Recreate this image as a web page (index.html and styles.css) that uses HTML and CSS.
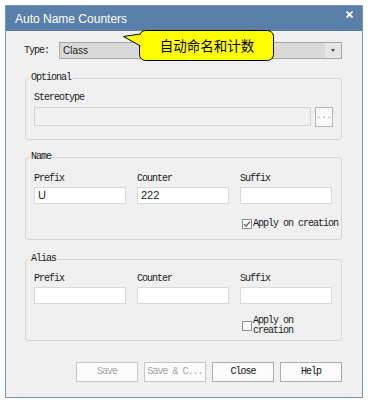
FILE: index.html
```html
<!DOCTYPE html>
<html lang="en">
<head>
    <meta charset="UTF-8" />
    <title>Auto Name Counters</title>
    <link rel="stylesheet" href="styles.css">
</head>
<body>
    <div class="window">
        <div class="titlebar">
            <span class="title">Auto Name Counters</span>
            <svg class="close" width="7" height="7" viewBox="0 0 7 7">
                <path d="M0.5 0.5 L6.5 6.5 M6.5 0.5 L0.5 6.5" stroke="#fff" stroke-width="1.8" />
            </svg>
        </div>
        <div class="content">
            <div class="type-row">
                <span class="type-label">Type:</span>
                <div class="combo">
                    <span class="combo-value">Class</span>
                    <span class="combo-arrow"><span class="arrow"></span></span>
                </div>
            </div>

            <fieldset class="group group-optional">
                <legend>Optional</legend>
                <div class="label">Stereotype</div>
                <div class="stereo-row">
                    <div class="field disabled"></div>
                    <div class="browse">...</div>
                </div>
            </fieldset>

            <fieldset class="group group-name">
                <legend>Name</legend>
                <div class="cols">
                    <div class="label">Prefix</div>
                    <div class="label">Counter</div>
                    <div class="label">Suffix</div>
                    <div class="field"><span class="value">U</span></div>
                    <div class="field"><span class="value">222</span></div>
                    <div class="field"></div>
                    <label class="check check-one">
                        <svg class="box" width="10" height="10" viewBox="0 0 10 10">
                            <rect x="0.5" y="0.5" width="9" height="9" fill="#fff" stroke="#8e8e8e" />
                            <path d="M2 5 L4 7.2 L8 2.6" fill="none" stroke="#4a4a4a" stroke-width="1.1" />
                        </svg>
                        <span>Apply on creation</span>
                    </label>
                </div>
            </fieldset>

            <fieldset class="group group-alias">
                <legend>Alias</legend>
                <div class="cols">
                    <div class="label">Prefix</div>
                    <div class="label">Counter</div>
                    <div class="label">Suffix</div>
                    <div class="field"></div>
                    <div class="field"></div>
                    <div class="field"></div>
                    <label class="check check-two">
                        <svg class="box" width="10" height="10" viewBox="0 0 10 10">
                            <rect x="0.5" y="0.5" width="9" height="9" fill="#fff" stroke="#8e8e8e" />
                        </svg>
                        <span>Apply on<br>creation</span>
                    </label>
                </div>
            </fieldset>

            <div class="buttons">
                <div class="button disabled">Save</div>
                <div class="button disabled">Save &amp; C...</div>
                <div class="button">Close</div>
                <div class="button">Help</div>
            </div>
        </div>

        <div class="balloon">
            <svg width="152" height="32" viewBox="0 0 152 32">
                <rect x="16.5" y="0.5" width="134" height="30" rx="6" fill="#ffff00" stroke="#000" />
                <path d="M17.5 4 L0.5 6.5 L17.5 16" fill="#ffff00" stroke="#000" />
            </svg>
            <span class="balloon-text">自动命名和计数</span>
        </div>
    </div>
</body>
</html>
```

FILE: styles.css
```css
body {
    margin: 0;
    background-color: #ffffff;
    font-family: "Liberation Mono", monospace;
    font-size: 10px;
    letter-spacing: -1px;
    color: #1a1a1a;
}
.window {
    position: relative;
    margin: 5px 0 0 5px;
    width: 358px;
    height: 393px;
    box-sizing: border-box;
    border: 1px solid #7293bb;
    background-color: #f0f0f0;
}
.titlebar {
    height: 25px;
    background-color: #5a7fa9;
    display: flex;
    justify-content: space-between;
    align-items: flex-start;
    padding: 0 9px 0 9px;
}
.title {
    margin-top: 6px;
    font-family: "Liberation Sans", sans-serif;
    font-size: 12px;
    line-height: 14px;
    letter-spacing: 0;
    color: #ffffff;
}
.close {
    margin-top: 5px;
}
.content {
    display: flex;
    flex-direction: column;
    padding: 0 20px 0 19px;
}
.type-row {
    display: flex;
    align-items: center;
    margin-top: 11px;
    height: 17px;
}
.type-label {
    width: 34px;
    margin-left: -1px;
    padding-left: 0;
}
.combo {
    display: flex;
    width: 283px;
    height: 17px;
    margin-left: 1px;
    box-sizing: border-box;
    border: 1px solid #a7a7a7;
    background-color: #d9d9d9;
}
.combo-value {
    flex: 1;
    padding-left: 3px;
    font-family: "Liberation Sans", sans-serif;
    font-size: 10px;
    letter-spacing: 0;
    line-height: 15px;
    color: #222;
}
.combo-arrow {
    width: 16px;
    background-color: #e6e6e6;
    display: flex;
    align-items: center;
    justify-content: center;
}
.arrow {
    width: 0;
    height: 0;
    border-left: 2px solid transparent;
    border-right: 2px solid transparent;
    border-top: 3px solid #444;
}
.group {
    margin: 0;
    border: 1px solid #d6d6d6;
    border-radius: 3px;
    padding: 8px 8px 12px 8px;
    min-width: 0;
}
.group legend {
    padding: 0 2px;
    margin-left: -5px;
    line-height: 12px;
}
.group-optional {
    margin-top: 13px;
}
.group-name {
    margin-top: 11px;
    padding-top: 10px;
    padding-bottom: 10px;
}
.group-alias {
    margin-top: 13px;
    padding-top: 8px;
    padding-bottom: 4px;
}
.label {
    line-height: 12px;
}
.group-optional .label {
    margin-bottom: 3px;
}
.stereo-row {
    display: flex;
    align-items: flex-start;
    gap: 4px;
    height: 20px;
}
.field {
    height: 17px;
    box-sizing: border-box;
    border: 1px solid #d9d9d9;
    background-color: #ffffff;
}
.stereo-row .field {
    flex: 1;
    height: 19px;
}
.field.disabled {
    background-color: #f0f0f0;
    border-color: #d3d3d3;
}
.value {
    display: block;
    padding-left: 3px;
    font-family: "Liberation Sans", sans-serif;
    font-size: 11px;
    letter-spacing: 0;
    line-height: 15px;
    color: #222;
}
.browse {
    width: 18px;
    height: 20px;
    box-sizing: border-box;
    border: 1px solid #b4b4b4;
    background-color: #fbfbfb;
    color: #8a8a8a;
    text-align: center;
    line-height: 17px;
    letter-spacing: 0;
    font-size: 9px;
}
.cols {
    display: grid;
    grid-template-columns: repeat(3, 92px);
    column-gap: 11px;
}
.cols .label {
    margin-bottom: 2px;
}
.check {
    grid-column: 3;
    display: flex;
    align-items: center;
    gap: 1px;
    margin-left: 2px;
    white-space: nowrap;
}
.check-one {
    margin-top: 14px;
    line-height: 11px;
}
.check-two {
    margin-top: 12px;
    line-height: 10px;
}
.box {
    flex: none;
}
.buttons {
    display: flex;
    justify-content: flex-end;
    gap: 6px;
    margin-top: 21px;
}
.button {
    width: 62px;
    height: 20px;
    box-sizing: border-box;
    border: 1px solid #adadad;
    background-color: #fcfcfc;
    text-align: center;
    line-height: 18px;
    color: #111;
}
.button.disabled {
    border-color: #c6c6c6;
    color: #a3a3a3;
}
.balloon {
    position: absolute;
    left: 117px;
    top: 24px;
    width: 152px;
    height: 32px;
}
.balloon svg {
    display: block;
}
.balloon-text {
    position: absolute;
    left: 17px;
    top: 0;
    width: 134px;
    height: 31px;
    line-height: 31px;
    text-align: center;
    font-family: "Noto Sans CJK SC", sans-serif;
    font-size: 13.5px;
    letter-spacing: 0;
    color: #000;
}
```
